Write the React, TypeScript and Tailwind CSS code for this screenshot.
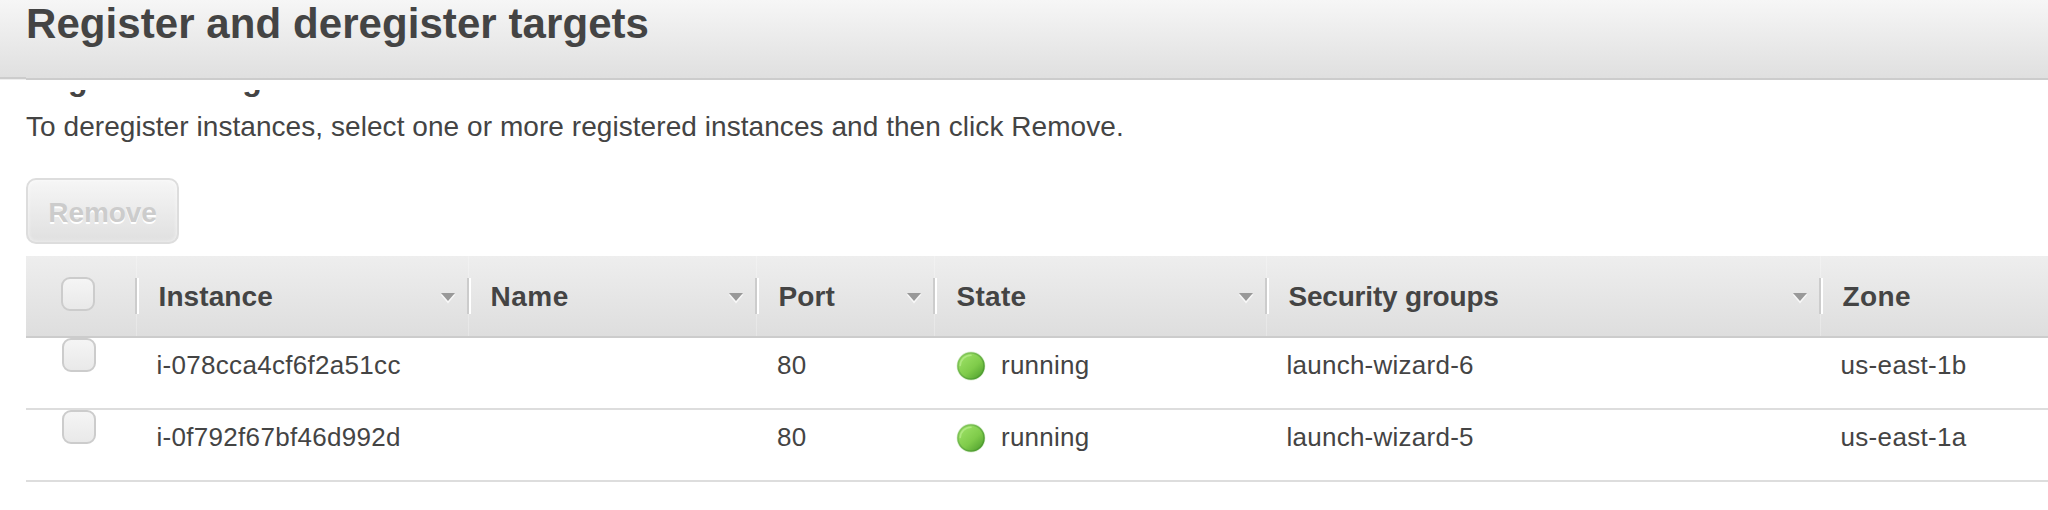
import React from 'react';

const grid = 'grid grid-cols-[109px_332px_288px_178px_332px_554px_1fr]';

const columns = [
  { label: 'Instance', tracking: 'tracking-[0.1px]' },
  { label: 'Name', tracking: 'tracking-[0.5px]' },
  { label: 'Port', tracking: 'tracking-[0.1px]' },
  { label: 'State', tracking: 'tracking-[0.3px]' },
  { label: 'Security groups', tracking: 'tracking-[-0.2px]' },
  { label: 'Zone', tracking: 'tracking-[0.4px]' },
];

const targets = [
  { id: 'i-078cca4cf6f2a51cc', port: '80', state: 'running', group: 'launch-wizard-6', zone: 'us-east-1b' },
  { id: 'i-0f792f67bf46d992d', port: '80', state: 'running', group: 'launch-wizard-5', zone: 'us-east-1a' },
];

function Checkbox() {
  return (
    <span
      role="checkbox"
      aria-checked="false"
      className="block size-[34px] rounded-[9px] border-2 border-[#cccccc] bg-linear-to-b from-[#f5f5f5] to-[#e9e9e9]"
    />
  );
}

function SortArrow() {
  return (
    <svg width="16" height="12" viewBox="0 0 16 12" className="mr-[11px] mt-[3px] shrink-0">
      <path d="M0.5 2.6h15L8 11.4z" fill="#f8f8f8" />
      <path d="M1 1h14L8 9z" fill="#999999" />
    </svg>
  );
}

function StatusDot({ id }: { id: string }) {
  return (
    <svg width="30" height="30" viewBox="0 0 30 30" className="mt-px shrink-0">
      <defs>
        <linearGradient id={`${id}-fill`} x1="0.15" y1="0.1" x2="0.85" y2="0.9">
          <stop offset="0" stopColor="#9be065" />
          <stop offset="0.6" stopColor="#7fcb4a" />
          <stop offset="1" stopColor="#58a833" />
        </linearGradient>
        <linearGradient id={`${id}-rim`} x1="0.1" y1="0.1" x2="0.9" y2="0.9">
          <stop offset="0" stopColor="#86c95c" />
          <stop offset="1" stopColor="#4a9a2c" />
        </linearGradient>
      </defs>
      <circle cx="15" cy="15" r="14.4" fill="#d9ecd0" />
      <circle cx="15" cy="15" r="13" fill={`url(#${id}-fill)`} stroke={`url(#${id}-rim)`} strokeWidth="1.6" />
      <path d="M4.2 14.5A10.8 10.8 0 0 1 15 4.2" fill="none" stroke="#aee880" strokeWidth="1.6" strokeLinecap="round" />
    </svg>
  );
}

export default function App() {
  return (
    <div className="h-[510px] w-full overflow-hidden bg-white font-['Liberation_Sans',Arial,sans-serif] text-[#444444]">
      <header className="h-20 bg-linear-to-b from-[#f6f6f6] to-[#dfdfdf]">
        <h1 className="h-[77px] pl-[26px] text-[42px] leading-[47px] font-bold tracking-[0.07px]">
          Register and deregister targets
        </h1>
        <div className="flex h-[3px]">
          <div className="w-[26px] border-b border-[#eeeeee] bg-[#cccccc]" />
          <div className="mt-px flex-1 bg-[#cccccc]" />
        </div>
      </header>

      <main className="pt-[10px] pl-[26px]">
        <div className="h-[21px] overflow-hidden">
          <h2 className="-mt-[29px] pl-px text-[32px] leading-[36px] font-bold">Registered targets</h2>
        </div>
        <p className="text-[28px] leading-[31px] tracking-[0.06px]">
          To deregister instances, select one or more registered instances and then click Remove.
        </p>

        <button
          type="button"
          disabled
          className="mt-[36px] flex h-[66px] w-[153px] items-center justify-center rounded-[10px] border-2 border-[#dddddd] bg-linear-to-b from-[#f6f6f6] to-[#e0e0e0] pt-[2px] text-[28px] leading-[31px] font-bold tracking-[-0.07px] text-[#cccccc] shadow-[inset_0_0_4px_#ffffffb0] [text-shadow:0_2px_0_#ffffff]"
        >
          Remove
        </button>

        <div className="mt-3">
          <div className={`${grid} h-[82px] border-b-2 border-[#cccccc] bg-linear-to-b from-[#eeeeee] to-[#dedede]`}>
            <div className="pt-[21px] pl-[35px]">
              <Checkbox />
            </div>
            {columns.map((c, i) => (
              <div key={c.label} className="relative flex items-center">
                <div className="absolute inset-y-0 left-px w-px bg-white/25" />
                <div className="relative h-9 w-1 border-x-2 border-l-[#cccccc] border-r-white" />
                <span className={`flex-1 pt-px pl-[19.5px] text-[28px] leading-[31px] font-bold ${c.tracking}`}>{c.label}</span>
                {i < columns.length - 1 && <SortArrow />}
              </div>
            ))}
          </div>
          {targets.map((t) => (
            <div
              key={t.id}
              className={`${grid} h-[72px] border-b-2 border-[#dddddd] text-[26px] leading-[30px] tracking-[0.25px]`}
            >
              <div className="pl-9">
                <Checkbox />
              </div>
              <div className="pt-3 pl-[21.5px] tracking-[0.3px]">{t.id}</div>
              <div />
              <div className="pt-3 pl-[22px]">{t.port}</div>
              <div className="flex h-[42px] items-center gap-[15px] pl-[23px] pt-3">
                <StatusDot id={t.id} />
                <span>{t.state}</span>
              </div>
              <div className="pt-3 pl-[21.5px]">{t.group}</div>
              <div className="pt-3 pl-[21.5px] tracking-[0.33px]">{t.zone}</div>
            </div>
          ))}
        </div>
      </main>
    </div>
  );
}
